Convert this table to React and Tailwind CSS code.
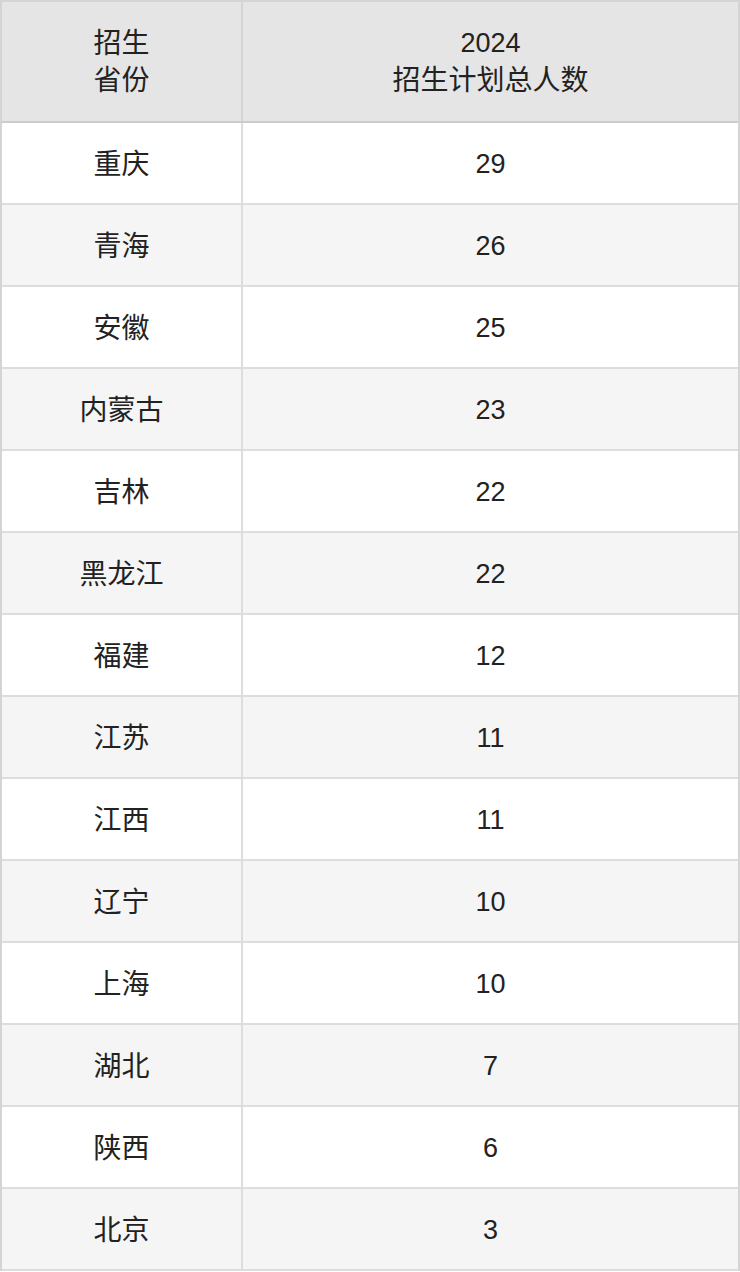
import React from 'react';

// 2024 plan by province
const rows = [
  ['重庆', 29],
  ['青海', 26],
  ['安徽', 25],
  ['内蒙古', 23],
  ['吉林', 22],
  ['黑龙江', 22],
  ['福建', 12],
  ['江苏', 11],
  ['江西', 11],
  ['辽宁', 10],
  ['上海', 10],
  ['湖北', 7],
  ['陕西', 6],
  ['北京', 3],
];

const App = () => {
  return (
    <div
      className="w-[740px] bg-white text-[#222] text-[27px] leading-[37px]"
      style={{ fontFamily: '"Liberation Sans", "Noto Sans CJK SC", sans-serif' }}
    >
      <div className="border-l-2 border-t-2 border-r-2 border-[#d4d4d4]">
        <div className="flex bg-[#e5e5e5] border-b-2 border-[#cccccc] h-[121px]">
          <div className="w-[241px] shrink-0 border-r-2 border-[#d4d4d4] flex flex-col items-center justify-center text-[28px]">
            <span>招生</span>
            <span>省份</span>
          </div>
          <div className="flex-1 flex flex-col items-center justify-center">
            <span>2024</span>
            <span className="text-[28px]">招生计划总人数</span>
          </div>
        </div>
        {rows.map(([name, num], i) => (
          <div
            key={name}
            className={`flex h-[82px] border-b-2 border-[#dddddd] ${i % 2 === 1 ? 'bg-[#f5f5f5]' : 'bg-white'}`}
          >
            <div className="w-[241px] shrink-0 border-r-2 border-[#dddddd] flex items-center justify-center text-[28px] pt-[2px]">
              {name}
            </div>
            <div className="flex-1 flex items-center justify-center pt-[2px]">{num}</div>
          </div>
        ))}
      </div>
    </div>
  );
};

export default App;
